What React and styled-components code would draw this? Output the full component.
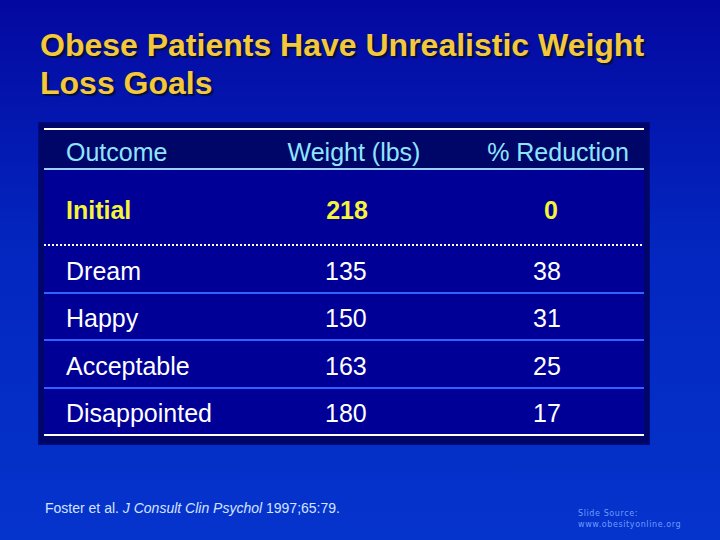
import React from "react";
import styled, { createGlobalStyle } from "styled-components";

const rows = [
  { outcome: "Dream", weight: "135", reduction: "38" },
  { outcome: "Happy", weight: "150", reduction: "31" },
  { outcome: "Acceptable", weight: "163", reduction: "25" },
  { outcome: "Disappointed", weight: "180", reduction: "17" },
];

function App() {
  return (
    <>
      <GlobalStyle />
      <Slide>
        <Title>
          Obese Patients Have Unrealistic Weight
          <br />
          Loss Goals
        </Title>
        <Frame>
          <HeaderRow>
            <Cell $pad="0 0 0 22px">Outcome</Cell>
            <Cell $align="center">Weight (lbs)</Cell>
            <Cell $align="center" $pad="0 0 0 8px">
              % Reduction
            </Cell>
          </HeaderRow>
          <InitialRow>
            <Cell $pad="0 0 0 22px">Initial</Cell>
            <Cell $align="center" $pad="0 14px 0 0">
              218
            </Cell>
            <Cell $align="center" $pad="0 6px 0 0">
              0
            </Cell>
          </InitialRow>
          <DottedLine />
          {rows.map((row, i) => (
            <BodyRow key={row.outcome} $last={i === rows.length - 1}>
              <Cell $pad="0 0 0 22px">{row.outcome}</Cell>
              <Cell $pad="0 0 0 81px">{row.weight}</Cell>
              <Cell $pad="0 0 0 69px">{row.reduction}</Cell>
            </BodyRow>
          ))}
        </Frame>
        <Footer>
          <Citation>
            Foster et al. <em>J Consult Clin Psychol</em> 1997;65:79.
          </Citation>
          <Source>
            Slide Source:
            <br />
            www.obesityonline.org
          </Source>
        </Footer>
      </Slide>
    </>
  );
}

const GlobalStyle = createGlobalStyle`
  html, body {
    margin: 0;
    padding: 0;
    background: #0020b8;
  }
`;

const Slide = styled.div`
  width: 720px;
  height: 540px;
  box-sizing: border-box;
  background: linear-gradient(180deg, #0408a0 0%, #0326bf 45%, #0534cc 100%);
  font-family: "Liberation Sans", Arial, sans-serif;
  display: flex;
  flex-direction: column;
  padding-top: 26px;
  overflow: hidden;
`;

const Title = styled.h1`
  margin: 0 0 0 40px;
  font-size: 32px;
  line-height: 38px;
  font-weight: bold;
  color: #f5c73a;
  text-shadow: 2px 2px 1px #00103a;
`;

const Frame = styled.div`
  margin: 20px 0 0 38px;
  width: 612px;
  box-sizing: border-box;
  padding: 6px 6px 9px 6px;
  background: #000668;
  box-shadow: inset 0 0 0 1px #000a80;
`;

const Row = styled.div`
  display: grid;
  grid-template-columns: 200px 220px 180px;
  align-items: center;
  box-sizing: border-box;
  font-size: 25px;
`;

const HeaderRow = styled(Row)`
  height: 42px;
  padding-top: 7px;
  border-top: 2px solid #ffffff;
  border-bottom: 2px solid #a0d0ff;
  background: #000668;
  color: #8fe4ff;
`;

const InitialRow = styled(Row)`
  height: 74px;
  padding-top: 7px;
  background: #000096;
  color: #f4f43a;
  font-weight: bold;
`;

const DottedLine = styled.div`
  height: 2px;
  background-color: #000096;
  background-image: repeating-linear-gradient(
    90deg,
    #ffffff 0 2.5px,
    transparent 2.5px 4px
  );
`;

const BodyRow = styled(Row)`
  height: 47.5px;
  padding-top: 5px;
  background: #000096;
  color: #ffffff;
  border-bottom: 2px solid ${(p) => (p.$last ? "#ffffff" : "#2f62ff")};
`;

const Cell = styled.div`
  text-align: ${(p) => p.$align || "left"};
  padding: ${(p) => p.$pad || "0"};
  white-space: nowrap;
`;

const Footer = styled.div`
  display: flex;
  align-items: flex-start;
  margin-top: 55px;
`;

const Citation = styled.div`
  margin-left: 45px;
  width: 533px;
  font-size: 14px;
  line-height: 16px;
  color: #d4e4ff;

  em {
    font-style: italic;
  }
`;

const Source = styled.div`
  margin-top: 8px;
  font-family: "DejaVu Sans", sans-serif;
  font-size: 8px;
  line-height: 11px;
  letter-spacing: 0.6px;
  color: #6f9cff;
`;

export default App;
